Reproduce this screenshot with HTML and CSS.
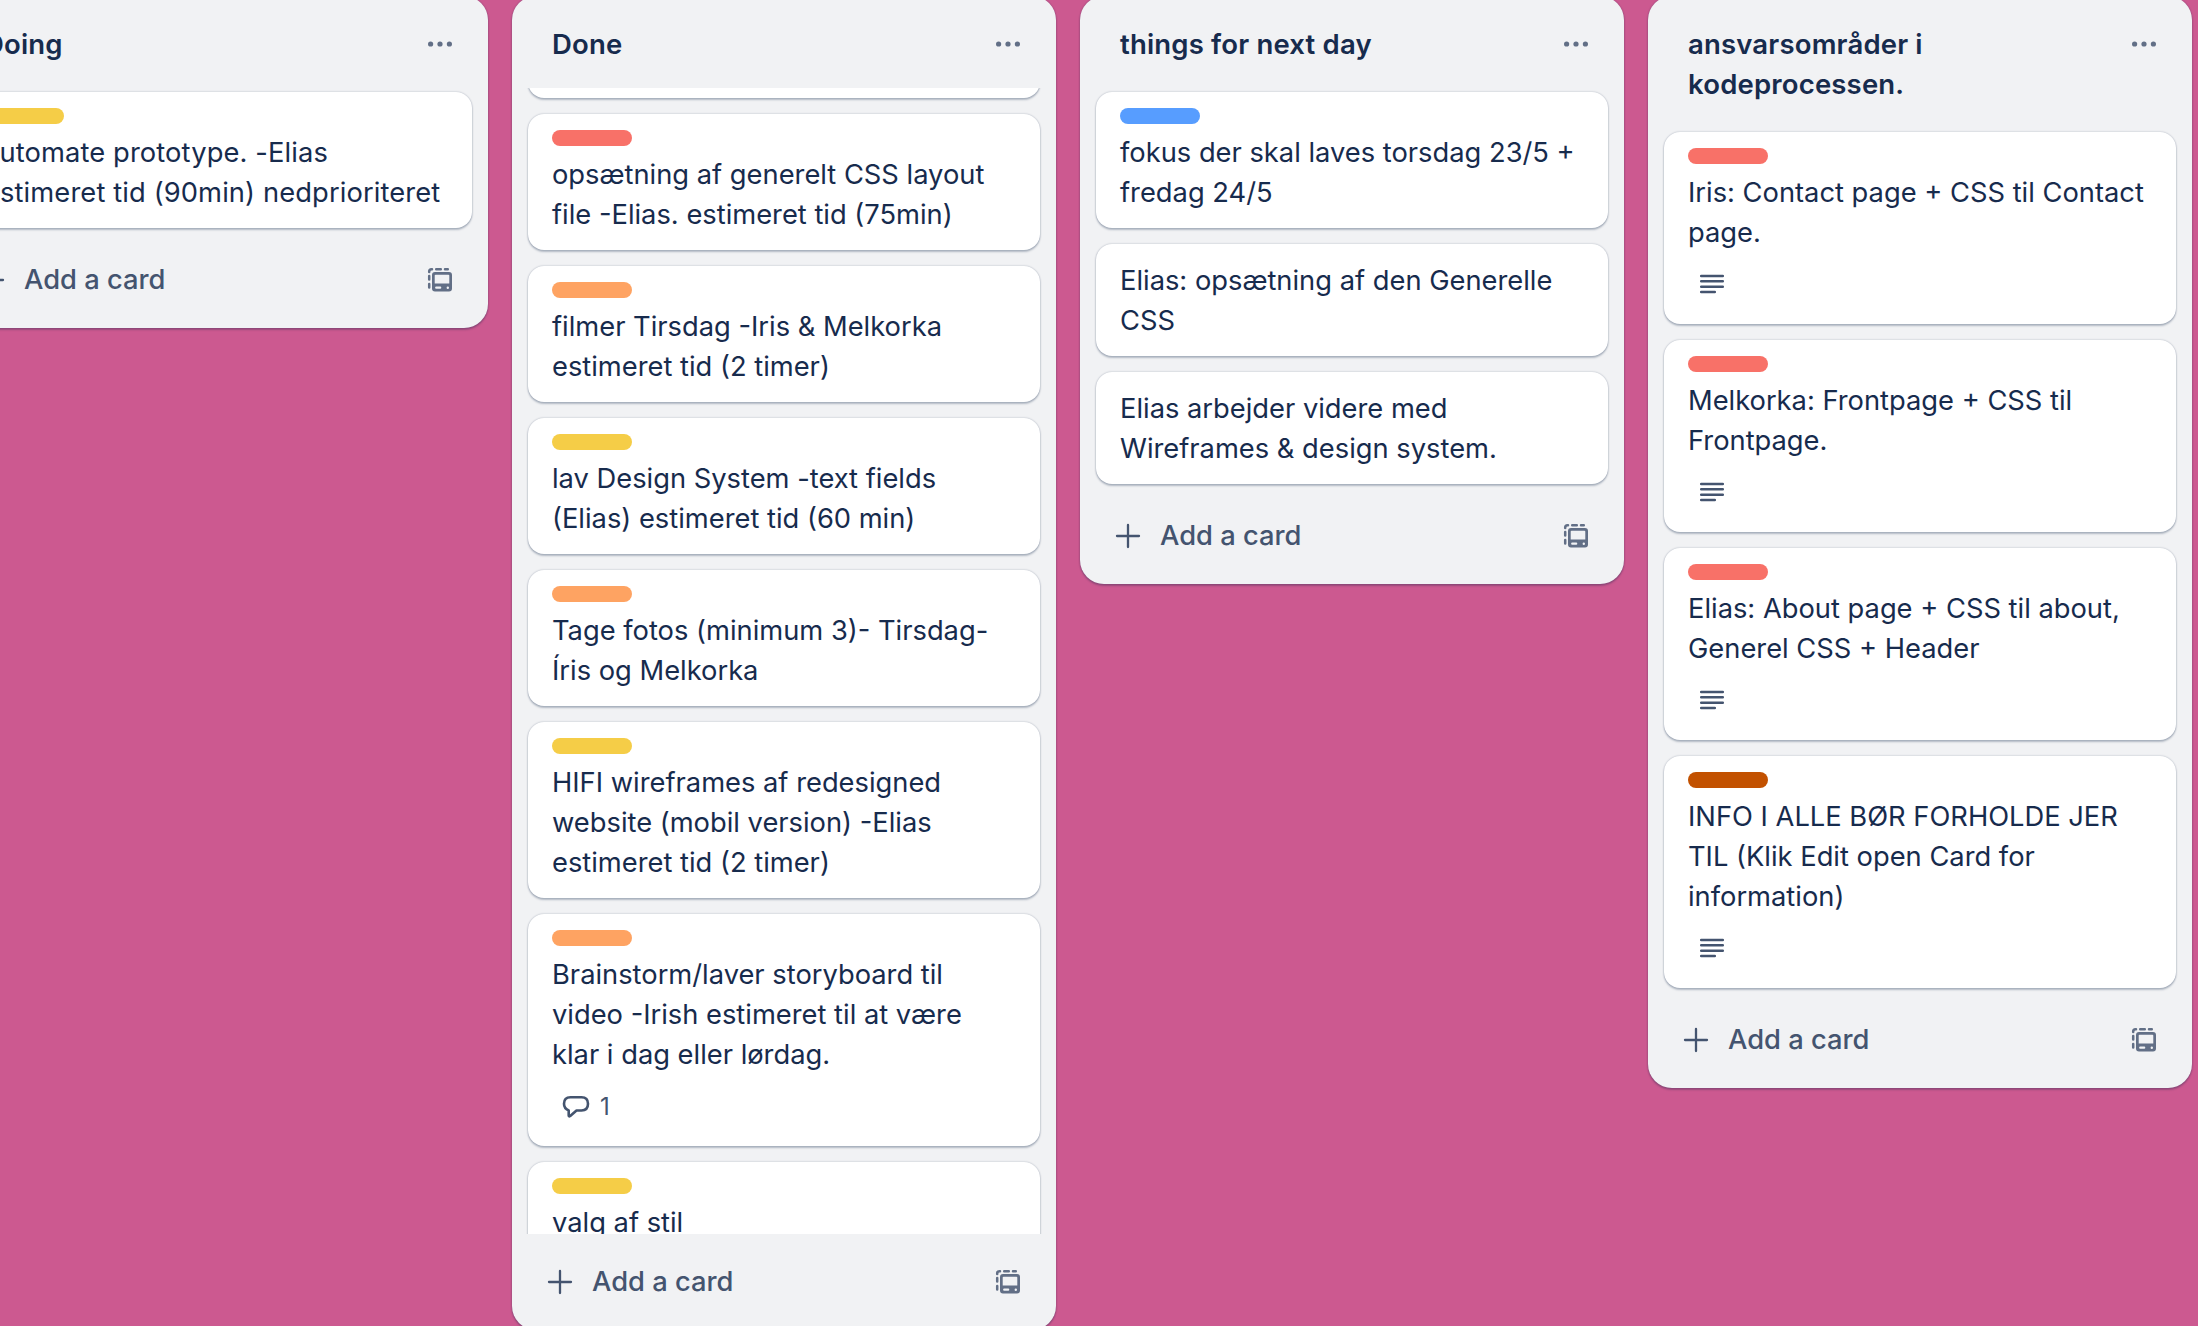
FILE: index.html
```html
<!DOCTYPE html>
<html lang="da">
<head>
<meta charset="utf-8">
<title>Board</title>
<link rel="stylesheet" href="styles.css">
</head>
<body>
<svg class="sprite" aria-hidden="true">
  <symbol id="dots" viewBox="0 0 32 32"><circle cx="6.600" cy="16" r="2.600"/><circle cx="16" cy="16" r="2.600"/><circle cx="25.400" cy="16" r="2.600"/></symbol>
  <symbol id="plus" viewBox="0 0 32 32"><path d="M16 5v22M5 16h22" fill="none" stroke="currentColor" stroke-width="2.300" stroke-linecap="round"/></symbol>
  <symbol id="template" viewBox="0 0 32 32"><path d="M5.200 8V7.500Q5.200 5.200 7.500 5.200H8M12.200 5.200h4.600M21 5.200h2.800M5.200 12v3.600M5.200 20v3.500" fill="none" stroke="currentColor" stroke-width="2.500" stroke-linecap="round"/><path fill-rule="evenodd" d="M11 8h14a3 3 0 0 1 3 3v13.500a3 3 0 0 1-3 3H11a3 3 0 0 1-3-3V11a3 3 0 0 1 3-3zM11.600 10.700h12.800a.9.9 0 0 1 .9.9v7.900H10.700v-7.900a.9.9 0 0 1 .9-.9zM12.200 22.600h4a1.100 1.100 0 0 1 0 2.200h-4a1.100 1.100 0 0 1 0-2.200zM23.800 22.500a1.200 1.200 0 1 1 0 2.400 1.200 1.200 0 0 1 0-2.400z"/></symbol>
  <symbol id="lines" viewBox="0 0 32 32"><path d="M5.200 8h21.600M5.200 13.300h21.600M5.200 18.700h21.600M5.200 24h13.600" fill="none" stroke="currentColor" stroke-width="2.500" stroke-linecap="round"/></symbol>
  <symbol id="comment" viewBox="0 0 32 32"><path d="M8.700 25.500V20.500Q4 18.500 4 13.800Q4 7.200 10.500 7.200H21.500Q28 7.200 28 13.800Q28 20.500 21.500 20.500H16.500L10.200 26Q8.700 27 8.700 25.500Z" fill="none" stroke="currentColor" stroke-width="2.600" stroke-linejoin="round"/></symbol>
</svg>
<main class="board">
  <section class="list">
    <header class="list-header"><h2>Doing</h2><svg class="icon muted"><use href="#dots"/></svg></header>
    <div class="cards">
      <article class="card"><span class="label yellow"></span><p class="wide">automate prototype. -Elias<br>estimeret tid (90min) nedprioriteret</p></article>
    </div>
    <footer class="list-footer"><svg class="icon"><use href="#plus"/></svg><span class="add">Add a card</span><svg class="icon muted"><use href="#template"/></svg></footer>
  </section>

  <section class="list list-full">
    <header class="list-header"><h2>Done</h2><svg class="icon muted"><use href="#dots"/></svg></header>
    <div class="cards cards-scrolled">
      <article class="card card-passed"></article>
      <article class="card"><span class="label red"></span><p>opsætning af generelt CSS layout<br>file -Elias. estimeret tid (75min)</p></article>
      <article class="card"><span class="label orange"></span><p>filmer Tirsdag -Iris &amp; Melkorka<br>estimeret tid (2 timer)</p></article>
      <article class="card"><span class="label yellow"></span><p>lav Design System -text fields<br>(Elias) estimeret tid (60 min)</p></article>
      <article class="card"><span class="label orange"></span><p>Tage fotos (minimum 3)- Tirsdag-<br>Íris og Melkorka</p></article>
      <article class="card"><span class="label yellow"></span><p>HIFI wireframes af redesigned<br>website (mobil version) -Elias<br>estimeret tid (2 timer)</p></article>
      <article class="card"><span class="label orange"></span><p>Brainstorm/laver storyboard til<br>video -Irish estimeret til at være<br>klar i dag eller lørdag.</p><div class="badges"><svg class="icon"><use href="#comment"/></svg><span>1</span></div></article>
      <article class="card"><span class="label yellow"></span><p>valg af stil</p></article>
    </div>
    <footer class="list-footer"><svg class="icon"><use href="#plus"/></svg><span class="add">Add a card</span><svg class="icon muted"><use href="#template"/></svg></footer>
  </section>

  <section class="list">
    <header class="list-header"><h2>things for next day</h2><svg class="icon muted"><use href="#dots"/></svg></header>
    <div class="cards">
      <article class="card"><span class="label blue"></span><p>fokus der skal laves torsdag 23/5 +<br>fredag 24/5</p></article>
      <article class="card"><p>Elias: opsætning af den Generelle<br>CSS</p></article>
      <article class="card"><p>Elias arbejder videre med<br>Wireframes &amp; design system.</p></article>
    </div>
    <footer class="list-footer"><svg class="icon"><use href="#plus"/></svg><span class="add">Add a card</span><svg class="icon muted"><use href="#template"/></svg></footer>
  </section>

  <section class="list">
    <header class="list-header"><h2>ansvarsområder i<br>kodeprocessen.</h2><svg class="icon muted"><use href="#dots"/></svg></header>
    <div class="cards">
      <article class="card"><span class="label red"></span><p>Iris: Contact page + CSS til Contact<br>page.</p><div class="badges"><svg class="icon"><use href="#lines"/></svg></div></article>
      <article class="card"><span class="label red"></span><p>Melkorka: Frontpage + CSS til<br>Frontpage.</p><div class="badges"><svg class="icon"><use href="#lines"/></svg></div></article>
      <article class="card"><span class="label red"></span><p>Elias: About page + CSS til about,<br>Generel CSS + Header</p><div class="badges"><svg class="icon"><use href="#lines"/></svg></div></article>
      <article class="card"><span class="label brown"></span><p>INFO I ALLE BØR FORHOLDE JER<br>TIL (Klik Edit open Card for<br>information)</p><div class="badges"><svg class="icon"><use href="#lines"/></svg></div></article>
    </div>
    <footer class="list-footer"><svg class="icon"><use href="#plus"/></svg><span class="add">Add a card</span><svg class="icon muted"><use href="#template"/></svg></footer>
  </section>
</main>
</body>
</html>
```
FILE: styles.css
```css
* { box-sizing: border-box; }
body {
  margin: 0;
  height: 1326px;
  overflow: hidden;
  background: #cc5990;
  color: #172b4d;
  font: 400 27.3px/40px Inter, "Liberation Sans", sans-serif;
}
h2, p { margin: 0; white-space: nowrap; }
.wide { letter-spacing: .12px; }
.sprite { display: none; }
.board {
  display: flex;
  align-items: flex-start;
  gap: 24px;
  width: 2248px;
  margin: -4px 0 0 -56px;
}
.list {
  display: flex;
  flex-direction: column;
  flex: none;
  width: 544px;
  border-radius: 24px;
  background: #f1f2f4;
  box-shadow: 0 2px 2px rgba(9, 30, 66, .25), 0 0 2px rgba(9, 30, 66, .31);
}
.list-full { height: 1334px; }
.list-header {
  display: flex;
  justify-content: space-between;
  align-items: flex-start;
  padding: 28px 32px 24px 40px;
}
.list-header h2 {
  font-size: 27.5px;
  font-weight: 600;
  line-height: 40px;
  letter-spacing: .18px;
}
.list-header .icon { margin-top: 4px; }
.icon { flex: none; width: 32px; height: 32px; fill: currentColor; color: #44546f; }
.muted { color: #626f86; }
.cards {
  display: flex;
  flex-direction: column;
  gap: 16px;
  padding: 4px 16px;
}
.cards-scrolled {
  flex: 1;
  min-height: 0;
  padding-block: 0;
  overflow: hidden;
}
.card {
  flex: none;
  padding: 17px 24px 15px;
  border-radius: 16px;
  background: #fff;
  box-shadow: 0 2px 2px rgba(9, 30, 66, .25), 0 0 2px rgba(9, 30, 66, .31);
}
.card-passed { height: 136px; margin-top: -126px; }
.label {
  display: block;
  width: 80px;
  height: 16px;
  margin: -1px 0 9px;
  border-radius: 8px;
}
.yellow { background: #f5cd47; }
.red { background: #f87168; }
.orange { background: #fea362; }
.blue { background: #579dff; }
.brown { background: #c25100; }
.badges {
  display: flex;
  align-items: center;
  gap: 8px;
  height: 32px;
  margin: 15px 0 9px 8px;
  color: #44546f;
  font-size: 24px;
}
.badges span { padding-top: 2px; }
.list-footer {
  display: flex;
  align-items: center;
  height: 96px;
  padding: 0 32px;
}
.list-footer .add {
  flex: 1;
  margin-left: 16px;
  color: #44546f;
  font-weight: 500;
}
```
